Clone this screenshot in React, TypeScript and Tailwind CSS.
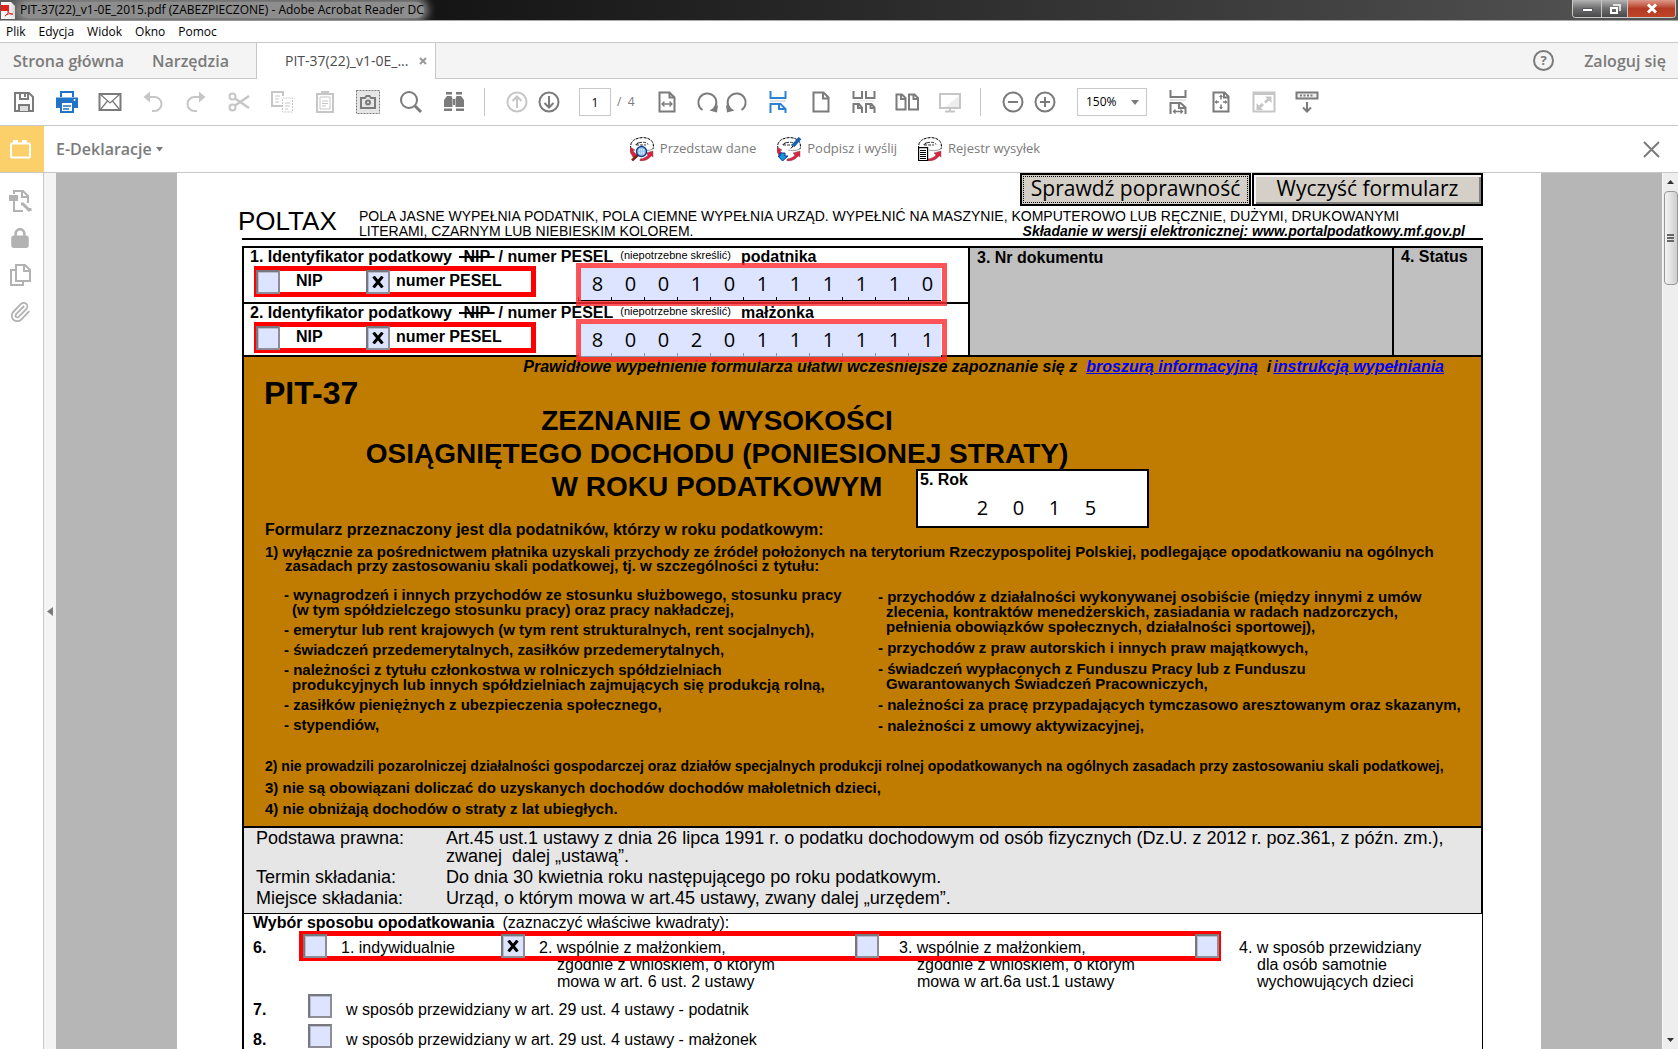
import { useState } from "react";
import type { ReactNode } from "react";
import { FaLock } from "react-icons/fa6";
import { Paperclip } from "lucide-react";
import clsx from "clsx";

interface IconProps {
  children: ReactNode;
  className?: string;
}

const Icon: React.FC<IconProps> = ({ children, className }) => (
  <svg
    viewBox="0 0 24 24"
    width="24"
    height="24"
    fill="none"
    stroke="currentColor"
    strokeWidth="2"
    className={className}
    aria-hidden="true"
  >
    {children}
  </svg>
);

const SaveIcon = () => (
  <Icon>
    <path d="M3 3h14l4 4v14H3z" />
    <path d="M8 3v6h8V3M13 4v3" />
    <path d="M7 21v-6h10v6" fill="#ddd" />
  </Icon>
);

const PrintIcon = () => (
  <Icon>
    <path d="M6 7V2h12v5" />
    <path d="M1 7.500h22V18h-4v-5H5v5H1z" fill="currentColor" stroke="none" />
    <path d="M6 13v9h12v-9" />
    <path d="M8 16h8M8 19h6" strokeWidth="1.500" />
    <circle cx="19.500" cy="10" r="1" fill="#fff" stroke="none" />
  </Icon>
);

const MailIcon = () => (
  <Icon>
    <path d="M1.500 4h21v16h-21z" />
    <path d="M2 4l10 9 10-9M2 20l7.500-9M22 20l-7.500-9" strokeWidth="1.300" />
  </Icon>
);

const UndoIcon = () => (
  <Icon>
    <path d="M5 7h8.500a7 7 0 010 14H11" />
    <path d="M9 1.500v11L2.500 7z" fill="currentColor" stroke="none" />
  </Icon>
);

const RedoIcon = () => (
  <Icon>
    <path d="M19 7h-8.500a7 7 0 000 14H13" />
    <path d="M15 1.500v11L21.500 7z" fill="currentColor" stroke="none" />
  </Icon>
);

const CutIcon = () => (
  <Icon>
    <circle cx="5.500" cy="6.500" r="3" />
    <circle cx="5.500" cy="17.500" r="3" />
    <path d="M8 8.500L22 18M8 15.500L22 6" strokeWidth="2.500" />
  </Icon>
);

const CopyIcon = () => (
  <Icon>
    <path d="M12 16H2V2h11v4" />
    <path d="M5 6h5M5 9h4M5 12h4" strokeWidth="1" />
    <path d="M12.500 8h10v14h-10z" strokeWidth="1" strokeDasharray="2 1" />
    <path d="M15 13h5M15 16h5M15 19h3" strokeWidth="1" />
  </Icon>
);

const PasteIcon = () => (
  <Icon>
    <path d="M4 4h16v18H4z" />
    <path d="M8 1h8v4H8z" fill="currentColor" stroke="none" />
    <path d="M7 7h10v12H7z" strokeWidth="1" />
    <path d="M9 11h6M9 13.500h6M9 16h4" strokeWidth="1" />
  </Icon>
);

const SnapshotIcon = () => (
  <Icon>
    <path d="M.5.5h23v23H.5z" fill="#e6e6e6" strokeWidth="1" strokeDasharray="2 1" />
    <path d="M5 8h4l1.500-2h3L15 8h4v10H5z" fill="#e6e6e6" />
    <circle cx="12" cy="12.500" r="2" />
  </Icon>
);

const SearchIcon = () => (
  <Icon>
    <circle cx="10" cy="10" r="8" />
    <path d="M16 16l6 6" strokeWidth="3" />
  </Icon>
);

const FindIcon = () => (
  <Icon>
    <g fill="currentColor" stroke="none">
      <path d="M4 2h6v2.500H4zM14 2h6v2.500h-6zM5 6h4.500l1 3v8H2v-7zM14.500 6H19l3 4v7h-8.500V9zM11 9h2v6h-2zM2 18.500h8V21H2zM14 18.500h8V21h-8z" />
    </g>
  </Icon>
);

const ArrowCircle = ({ up }: { up?: boolean }) => (
  <Icon>
    <circle cx="12" cy="12" r="9.500" />
    {up ? (
      <path d="M12 18V7M7.500 11L12 6.500l4.500 4.500" />
    ) : (
      <path d="M12 6v11M7.500 13l4.500 4.500 4.500-4.500" />
    )}
  </Icon>
);

const FitWidthIcon = () => (
  <Icon>
    <path d="M4.500 2.500h10l5 5v14h-15zM14.500 2.500v5h5" />
    <path d="M7 14h10M9.500 11.500L7 14l2.500 2.500M14.500 11.500L17 14l-2.500 2.500" strokeWidth="1.300" />
  </Icon>
);

const RotateIcon = ({ ccw }: { ccw?: boolean }) => (
  <Icon className={clsx(ccw && "-scale-x-100")}>
    <path d="M6.500 20A9 9 0 1118 18.500" />
    <path d="M22 15l-1 7.500-7.500-2z" fill="currentColor" stroke="none" />
  </Icon>
);

const ScrollPageIcon = () => (
  <Icon>
    <path d="M4.500 1v7h15V1" />
    <path d="M4 11h16" stroke="#e4e4e4" />
    <path d="M4.500 23v-9h10l5 5v4M13 14v5h6" />
  </Icon>
);

const PageIcon = () => (
  <Icon>
    <path d="M4.500 2.500h10l5 5v14h-15zM14 2.500v6h5.500" />
  </Icon>
);

const TwoScrollIcon = () => (
  <Icon>
    <path d="M1.500 1v7h8.500V1M14 1v7h8.500V1" />
    <path d="M1 11h22" stroke="#e4e4e4" strokeWidth="1" />
    <path d="M1.500 23v-9H7l3 3.500V23M6 14v4h4M14 23v-9h5.500l3 3.500V23M18.500 14v4h4" />
  </Icon>
);

const TwoPageIcon = () => (
  <Icon>
    <path d="M1.500 4.500H7L10.500 8v11.500h-9zM6 4.500V9h4.500M14 4.500h5.500L23 8v11.500h-9zM18.500 4.500V9H23" />
  </Icon>
);

const MonitorIcon = () => (
  <Icon>
    <path d="M2 4h20v14H2z" />
    <path d="M21 6v11H7z" fill="#eee" stroke="none" />
    <path d="M12 18v3M7 21.500h10" />
  </Icon>
);

const ZoomCircle = ({ plus }: { plus?: boolean }) => (
  <Icon>
    <circle cx="12" cy="12" r="9.500" />
    <path d={plus ? "M7 12h10M12 7v10" : "M7 12h10"} />
  </Icon>
);

const ScrollWidthIcon = () => (
  <Icon>
    <path d="M4.500 0v7h15V0" />
    <path d="M4 10h16" stroke="#e4e4e4" />
    <path d="M4.500 24V13h10l5 4.500V24M13 13v5h6" />
    <path d="M7.500 21.500h9M9.500 19.500l-2 2 2 2M14.500 19.500l2 2-2 2" strokeWidth="1.300" />
  </Icon>
);

const FitPageIcon = () => (
  <Icon>
    <path d="M4.500 2.500h11l4 4v15h-15zM15 2.500v5h4.500" />
    <path d="M12 5.500v4M12 14.500v4M6.500 12H10M14 12h3.500" strokeWidth="1.500" />
    <path d="M12 4.500l2 2.500h-4zM12 19.500l2-2.500h-4zM5.500 12L8 10v4zM18.500 12L16 10v4z" fill="currentColor" stroke="none" />
  </Icon>
);

const FullScreenIcon = () => (
  <Icon>
    <path d="M1.500 2.500h21v19h-21z" />
    <path d="M1 4h22" />
    <path d="M13 6.500h6.500V13L17 10.500 14 13.500 12 11.500l3-3zM4.500 13l2.500 2.500 3-2.500 2 2-3 3 2 2H4.500z" fill="currentColor" stroke="none" />
  </Icon>
);

const KeyboardIcon = () => (
  <Icon>
    <path d="M1.500 2.500h21v6h-21z" fill="#eee" />
    <path d="M5 5.500h14" strokeDasharray="2 1.500" />
    <path d="M12 12v9M8 17.500l4 4 4-4" />
  </Icon>
);

const BrickIcon = () => (
  <svg width="22" height="20" viewBox="0 0 22 20" aria-hidden="true">
    <rect x="1" y="4.500" width="19" height="14" rx="1" fill="none" stroke="#fff" strokeWidth="2" />
    <path d="M3 4V1h5v3zM12 4V1h5v3z" fill="#fff" />
  </svg>
);

type DeclKind = "show" | "sign" | "list";

const DeclIcon = ({ kind }: { kind: DeclKind }) => (
  <svg width="24" height="24" viewBox="0 0 24 24" fill="none" aria-hidden="true">
    <path d="M1 12C-1 4 6 .6 13 .6S25 5 23 12" stroke="#000" strokeDasharray="3 1" />
    <path d="M6 8c0-3 11-4 12-.5M9 5.500l-3 2.500h10" stroke="#000" strokeWidth=".8" strokeDasharray="3 1" />
    <path d="M11 13c3 1 8 1 12-1" stroke="#888" strokeWidth=".8" />
    {kind !== "list" && <path d="M0 10l5 3-2 1 5 5-4 3-4-7z" fill="#e0203f" stroke="#666" strokeWidth=".5" />}
    <path d="M10 22c4-.5 6-2 8-4l-2-2 7-2v6l-1.500-1c-3 3-6 5-11.500 5z" fill="#e0203f" stroke="#666" strokeWidth=".5" />
    {kind === "show" && (
      <>
        <path d="M8 18l-6 5.500" stroke="#7d2512" strokeWidth="2.500" />
        <circle cx="11.500" cy="14.500" r="5" fill="#9cc8f5" stroke="#123a8a" strokeWidth="1.400" />
        <path d="M9 13h5M9 16h5" stroke="#fff" strokeDasharray="1 1" />
      </>
    )}
    {kind === "sign" && (
      <>
        <path d="M23 1l-7 8" stroke="#1560b0" strokeWidth="3.500" />
        <path d="M16 9l-2 2.500" stroke="#000" />
        <path d="M3 16h5v3h3l-5.500 5L1 19h2z" fill="#0d9bd0" stroke="#1b2fae" />
      </>
    )}
    {kind === "list" && (
      <>
        <path d="M.6 10.600h9v13h-9z" fill="#fff" stroke="#000" strokeWidth="1.200" />
        <path d="M2 13.500h6M2 15.500h6M2 17.500h6M2 19.500h6M2 21.500h6" stroke="#000" />
      </>
    )}
  </svg>
);

interface ToolProps {
  label: string;
  icon: ReactNode;
  width?: string;
  tone?: string;
}

const Tool: React.FC<ToolProps> = ({
  label,
  icon,
  width = "w-[43px]",
  tone = "text-[#7b7b7b]",
}) => (
  <button
    type="button"
    aria-label={label}
    className={clsx("flex h-9 shrink-0 items-center justify-center", width, tone)}
  >
    {icon}
  </button>
);

const FAINT = "text-[#c6c6c6]";

const fileTools: ToolProps[] = [
  { label: "Zapisz", icon: <SaveIcon /> },
  { label: "Drukuj", icon: <PrintIcon />, tone: "text-[#2173c6]" },
  { label: "Wyślij e-mail", icon: <MailIcon /> },
  { label: "Cofnij", icon: <UndoIcon />, tone: FAINT },
  { label: "Ponów", icon: <RedoIcon />, tone: FAINT },
  { label: "Wytnij", icon: <CutIcon />, tone: FAINT },
  { label: "Kopiuj", icon: <CopyIcon />, tone: FAINT },
  { label: "Wklej", icon: <PasteIcon />, tone: FAINT },
  { label: "Migawka", icon: <SnapshotIcon /> },
  { label: "Znajdź", icon: <SearchIcon /> },
  { label: "Wyszukiwanie zaawansowane", icon: <FindIcon /> },
];

const viewTools: ToolProps[] = [
  { label: "Przewijanie", icon: <ScrollPageIcon />, tone: "text-[#2a82d6]" },
  { label: "Jedna strona", icon: <PageIcon /> },
  { label: "Przewijanie dwóch stron", icon: <TwoScrollIcon /> },
  { label: "Dwie strony", icon: <TwoPageIcon /> },
  { label: "Tryb czytania", icon: <MonitorIcon />, tone: FAINT },
];

const fitTools: ToolProps[] = [
  { label: "Dopasuj szerokość", icon: <ScrollWidthIcon /> },
  { label: "Dopasuj stronę", icon: <FitPageIcon /> },
  { label: "Pełny ekran", icon: <FullScreenIcon />, tone: FAINT },
  { label: "Klawiatura", icon: <KeyboardIcon /> },
];

const TitleBar = () => (
  <header className="flex h-[21px] shrink-0 items-start justify-between border-b border-[#a9a9a9] bg-linear-to-r from-[#5a5a5a] via-[#151515] via-26% to-[#555]">
    <div className="flex h-5 items-center gap-[5px] pl-px">
      <svg width="14" height="17" viewBox="0 0 14 17" aria-hidden="true">
        <path d="M0 0h10l4 4v13H0z" fill="#f4f4f4" />
        <path d="M0 3h8v6H0z" fill="#e2231a" />
        <path d="M4 14c3-2 4-5 3-7-1 3 2 6 5 5-3-1-6 0-8 2z" fill="none" stroke="#e2231a" />
      </svg>
      <span className="rounded-full bg-[#8d8d8d] text-xs leading-4 text-black shadow-[0_0_8px_4px_#8d8d8d]">
        PIT-37(22)_v1-0E_2015.pdf (ZABEZPIECZONE) - Adobe Acrobat Reader DC
      </span>
    </div>
    <div className="mr-0.5 flex h-[18px] overflow-hidden rounded-b border border-t-0 border-[#c8c8c8]">
      <button type="button" aria-label="Minimalizuj" className="flex w-[29px] items-center justify-center border-r border-[#c8c8c8] bg-linear-to-b from-[#b5b5b5] via-[#6e6e6e] via-50% to-[#494949]">
        <svg width="11" height="6" viewBox="0 0 11 6"><path d="M.5 2.500h10v3H.5z" fill="#fff" stroke="#556" /></svg>
      </button>
      <button type="button" aria-label="Przywróć" className="flex w-[26px] items-center justify-center border-r border-[#c8c8c8] bg-linear-to-b from-[#b5b5b5] via-[#6e6e6e] via-50% to-[#494949]">
        <svg width="12" height="12" viewBox="0 0 12 12" fill="none" stroke="#fff" strokeWidth="2">
          <path d="M4 2h7v6" strokeWidth="1.500" />
          <path d="M2 5h6v5H2z" />
        </svg>
      </button>
      <button type="button" aria-label="Zamknij" className="flex w-[47px] items-center justify-center bg-linear-to-b from-[#dc9a8c] via-[#b53a22] via-50% to-[#c04428]">
        <svg width="12" height="11" viewBox="0 0 12 11" stroke="#fff" strokeWidth="3"><path d="M2 1.500l8 8M10 1.500l-8 8" /></svg>
      </button>
    </div>
  </header>
);

const MenuBar = () => (
  <nav className="flex h-[21px] shrink-0 items-center gap-[13px] bg-white pl-1.5 text-xs text-black">
    {["Plik", "Edycja", "Widok", "Okno", "Pomoc"].map((item) => (
      <button key={item} type="button">
        {item}
      </button>
    ))}
  </nav>
);

const TabBar = () => (
  <div className="flex h-[37px] shrink-0 items-stretch border-y border-[#c8c8c8] bg-[#f4f4f4] text-base font-semibold text-[#7b7b7b]">
    <div className="flex w-64 items-center gap-7 pl-[13px]">
      <button type="button">Strona główna</button>
      <button type="button">Narzędzia</button>
    </div>
    <div className="-mb-px flex w-[180px] items-center justify-between border-x border-[#c8c8c8] bg-white pr-2 pl-7 text-sm font-normal text-[#4b4b4b]">
      PIT-37(22)_v1-0E_...
      <button type="button" aria-label="Zamknij kartę" className="text-[#999]">
        <svg width="8" height="8" viewBox="0 0 8 8" stroke="currentColor" strokeWidth="2"><path d="M1 1l6 6M7 1L1 7" /></svg>
      </button>
    </div>
    <div className="flex flex-1 items-center justify-end gap-[30px] pr-3">
      <button type="button" aria-label="Pomoc" className="flex size-[21px] items-center justify-center rounded-full border-2 border-[#7b7b7b] text-[13px] leading-none font-bold">
        ?
      </button>
      <button type="button">Zaloguj się</button>
    </div>
  </div>
);

const Toolbar = () => {
  const [page, setPage] = useState("1");

  return (
    <div className="flex h-[47px] shrink-0 items-center border-b border-[#c8c8c8] bg-white pl-0.5">
      {fileTools.map((tool) => (
        <Tool key={tool.label} {...tool} />
      ))}
      <div className="mr-4 ml-[9px] h-7 w-px bg-[#c8c8c8]" />
      <Tool label="Poprzednia strona" icon={<ArrowCircle up />} width="w-8" tone={FAINT} />
      <Tool label="Następna strona" icon={<ArrowCircle />} width="w-8" />
      <input
        aria-label="Numer strony"
        value={page}
        onChange={(e) => setPage(e.target.value)}
        className="ml-3.5 h-7 w-8 border border-[#c8c8c8] text-center text-xs"
      />
      <span className="ml-1.5 w-7 text-xs text-[#7b7b7b]">/&nbsp; 4</span>
      <Tool label="Dopasuj do szerokości" icon={<FitWidthIcon />} />
      <div className="mx-1.5 flex">
        <Tool label="Obróć w prawo" icon={<RotateIcon />} width="w-7" />
        <Tool label="Obróć w lewo" icon={<RotateIcon ccw />} width="w-7" />
      </div>
      {viewTools.map((tool) => (
        <Tool key={tool.label} {...tool} />
      ))}
      <div className="mr-4 ml-[9px] h-7 w-px bg-[#c8c8c8]" />
      <Tool label="Pomniejsz" icon={<ZoomCircle />} width="w-8" />
      <Tool label="Powiększ" icon={<ZoomCircle plus />} width="w-8" />
      <div className="relative mr-[9px] ml-4">
        <select
          aria-label="Powiększenie"
          defaultValue="150%"
          className="h-7 w-[70px] appearance-none border border-[#c8c8c8] bg-white pl-2 text-xs"
        >
          <option>100%</option>
          <option>150%</option>
          <option>200%</option>
        </select>
        <svg width="8" height="5" viewBox="0 0 8 5" className="pointer-events-none absolute top-3 right-2" fill="#7b7b7b">
          <path d="M0 0h8L4 5z" />
        </svg>
      </div>
      {fitTools.map((tool) => (
        <Tool key={tool.label} {...tool} />
      ))}
    </div>
  );
};

const actions: { label: string; kind: DeclKind }[] = [
  { label: "Przedstaw dane", kind: "show" },
  { label: "Podpisz i wyślij", kind: "sign" },
  { label: "Rejestr wysyłek", kind: "list" },
];

const DeclarationBar = () => (
  <div className="flex h-[47px] shrink-0 items-stretch border-b border-[#c8c8c8] bg-white text-[#7b7b7b]">
    <div className="flex flex-1 items-center">
      <div className="flex h-full w-11 items-center justify-center bg-[#fbd06b] pr-0.5">
        <BrickIcon />
      </div>
      <button type="button" className="flex items-center gap-1 pl-3 text-base font-semibold">
        E-Deklaracje
        <svg width="7" height="5" viewBox="0 0 7 5" fill="currentColor"><path d="M0 0h7L3.500 4.500z" /></svg>
      </button>
    </div>
    <div className="flex items-center gap-[21px] pl-2.5">
      {actions.map(({ label, kind }) => (
        <button key={label} type="button" className="flex items-center gap-1.5 text-[13px]">
          <DeclIcon kind={kind} />
          {label}
        </button>
      ))}
    </div>
    <div className="flex flex-1 items-center justify-end pr-[18px]">
      <button type="button" aria-label="Zamknij panel">
        <svg width="17" height="17" viewBox="0 0 17 17" stroke="currentColor" strokeWidth="2"><path d="M1 1l15 15M16 1L1 16" /></svg>
      </button>
    </div>
  </div>
);

const SideRail = () => (
  <aside className="flex shrink-0">
    <div className="flex w-11 flex-col items-center gap-[13px] border-r border-[#c8c8c8] bg-white pt-4 pr-1 text-[#b2b2b2]">
      <button type="button" aria-label="Miniatury" className="h-6">
        <Icon>
          <path d="M6 5V2h9l5 5v7M6 12v10h9M14 3v5h5" />
          <path d="M1 6h9v6H1z" fill="currentColor" stroke="none" />
          <path d="M15 15l7 7M13 15h3M22 19v3" strokeWidth="3" />
        </Icon>
      </button>
      <button type="button" aria-label="Zabezpieczenia" className="flex h-6 items-center">
        <FaLock size={20} />
      </button>
      <button type="button" aria-label="Strony" className="h-6">
        <Icon>
          <path d="M8 7H3v15h12v-4" />
          <path d="M8 2h9l5 5v11H8zM16 2v6h5" />
        </Icon>
      </button>
      <button type="button" aria-label="Załączniki" className="flex h-6 items-center">
        <Paperclip size={22} strokeWidth={2} />
      </button>
    </div>
    <button type="button" aria-label="Pokaż panel" className="flex w-3 items-center justify-center bg-[#f4f4f4]">
      <svg width="6" height="9" viewBox="0 0 6 9" fill="#7b7b7b"><path d="M6 0v9L0 4.500z" /></svg>
    </button>
  </aside>
);

const ScrollBar = () => (
  <div className="flex w-4 shrink-0 flex-col items-center border-l border-[#f8f8f8] bg-[#eeeeee]" aria-hidden="true">
    <div className="flex h-[18px] items-center">
      <svg width="7" height="4" viewBox="0 0 7 4" fill="#333"><path d="M0 4h7L3.500 0z" /></svg>
    </div>
    <div className="flex h-[94px] w-3.5 flex-col items-center justify-center gap-px rounded-sm border border-[#979797] bg-linear-to-r from-[#f4f4f4] to-[#cfcfcf]">
      <div className="h-0.5 w-[7px] bg-[#666]" />
      <div className="h-0.5 w-[7px] bg-[#666]" />
      <div className="h-0.5 w-[7px] bg-[#666]" />
    </div>
    <div className="mt-auto flex h-[18px] items-center">
      <svg width="7" height="4" viewBox="0 0 7 4" fill="#333"><path d="M0 0h7L3.500 4z" /></svg>
    </div>
  </div>
);

interface CheckProps {
  id: string;
  label?: string;
  checked?: boolean;
}

const Check: React.FC<CheckProps> = ({ id, label, checked = false }) => {
  const [on, setOn] = useState(checked);

  return (
    <span className="relative z-20 block size-6 shrink-0">
      <input
        id={id}
        type="checkbox"
        aria-label={label}
        checked={on}
        onChange={() => setOn(!on)}
        className="block size-6 appearance-none border-2 border-[#77777f] border-r-[#8d8d95] border-b-[#8d8d95] bg-[#dde4ff] shadow-[inset_1px_1px_0_#b9bccb]"
      />
      {on && (
        <svg viewBox="0 0 12 12" className="pointer-events-none absolute top-1.5 left-1.5 size-3" stroke="#000" strokeWidth="3">
          <path d="M1.500.5l9 11M10.500.5l-9 11" />
        </svg>
      )}
    </span>
  );
};

interface CombFieldProps {
  digits: string;
  label: string;
  tick: string;
}

const CombField: React.FC<CombFieldProps> = ({ digits, label, tick }) => (
  <div className="relative z-10 mt-[3px] flex h-[33px] bg-[#dde4ff]">
    {digits.split("").map((digit, i) => (
      <div key={i} className="relative w-[33px]">
        <input
          aria-label={`${label}, cyfra ${i + 1}`}
          defaultValue={digit}
          maxLength={1}
          className="h-[31px] w-full bg-transparent pl-1.5 text-center font-['Open_Sans',sans-serif] text-xl text-black"
        />
        <span className={clsx("absolute bottom-0 left-0 h-1 w-full border-b border-l", tick)} />
      </div>
    ))}
    <span className="pointer-events-none absolute -inset-y-[5px] -right-1.5 -left-0.5 border-[5px] border-[#ff2a2f]/80" />
  </div>
);

interface TaxIdRowProps {
  no: number;
  who: string;
  digits: string;
  tick: string;
}

const TaxIdRow: React.FC<TaxIdRowProps> = ({ no, who, digits, tick }) => (
  <>
    <div className="flex gap-1 pt-px pl-1.5 leading-4 font-bold">
      <span className="w-[205px]">{no}. Identyfikator podatkowy</span>
      <span className="line-through decoration-2">&nbsp;NIP&nbsp;</span>
      <span>/ numer PESEL</span>
      <span className="mr-1.5 ml-[3px] text-[11px] leading-3 font-normal">(niepotrzebne skreślić)</span>
      <span>{who}</span>
    </div>
    <div className="flex items-start pl-2.5">
      <div className="relative mt-px mr-[42px] flex h-[31px] w-[282px] items-center pl-0.5 font-bold">
        <span className="absolute inset-0 border-[5px] border-[#ff0000]" />
        <Check id={`nip-${no}`} />
        <label htmlFor={`nip-${no}`} className="ml-4 w-[70px] pb-0.5 leading-4">
          NIP
        </label>
        <Check id={`pesel-${no}`} checked />
        <label htmlFor={`pesel-${no}`} className="ml-1.5 pb-0.5 leading-4">
          numer PESEL
        </label>
      </div>
      <CombField digits={digits} label={`PESEL ${who}`} tick={tick} />
    </div>
  </>
);

const leftItems: string[][] = [
  [
    "- wynagrodzeń i innych przychodów ze stosunku służbowego, stosunku pracy",
    "(w tym spółdzielczego stosunku pracy) oraz pracy nakładczej,",
  ],
  ["- emerytur lub rent krajowych (w tym rent strukturalnych, rent socjalnych),"],
  ["- świadczeń przedemerytalnych, zasiłków przedemerytalnych,"],
  [
    "- należności z tytułu członkostwa w rolniczych spółdzielniach",
    "produkcyjnych lub innych spółdzielniach zajmujących się produkcją rolną,",
  ],
  ["- zasiłków pieniężnych z ubezpieczenia społecznego,"],
  ["- stypendiów,"],
];

const rightItems: string[][] = [
  [
    "- przychodów z działalności wykonywanej osobiście (między innymi z umów",
    "zlecenia, kontraktów menedżerskich, zasiadania w radach nadzorczych,",
    "pełnienia obowiązków społecznych, działalności sportowej),",
  ],
  ["- przychodów z praw autorskich i innych praw majątkowych,"],
  [
    "- świadczeń wypłaconych z Funduszu Pracy lub z Funduszu",
    "Gwarantowanych Świadczeń Pracowniczych,",
  ],
  ["- należności za pracę przypadających tymczasowo aresztowanym oraz skazanym,"],
  ["- należności z umowy aktywizacyjnej,"],
];

const IncomeList = ({ items, className }: { items: string[][]; className: string }) => (
  <ul className={clsx("flex flex-col whitespace-nowrap", className)}>
    {items.map((lines) => (
      <li key={lines[0]} className="pl-2">
        {lines.map((line, i) => (
          <span key={line} className={clsx("block", i === 0 && "-ml-2")}>
            {line}
          </span>
        ))}
      </li>
    ))}
  </ul>
);

const FormIntro = () => (
  <section className="border-x-2 border-b-2 border-black bg-[#bf7c00] pt-0.5 pb-2.5 font-bold">
    <p className="flex justify-end gap-[9px] pr-[37px] leading-4 whitespace-nowrap italic">
      Prawidłowe wypełnienie formularza ułatwi wcześniejsze zapoznanie się z
      <a href="#broszura" className="text-[#0000ff] underline">
        broszurą informacyjną
      </a>
      <span className="flex gap-0.5">
        i
        <a href="#instrukcja" className="text-[#0000ff] underline">
          instrukcją wypełniania
        </a>
      </span>
    </p>
    <p className="mt-0.5 h-[27px] pl-5 text-[32px] leading-8">PIT-37</p>
    <div className="grid">
      <div className="[grid-area:1/1]">
        <h1 className="w-[946px] text-center text-[28px] leading-[33px]">
          ZEZNANIE O WYSOKOŚCI
          <br />
          OSIĄGNIĘTEGO DOCHODU (PONIESIONEJ STRATY)
          <br />W ROKU PODATKOWYM
        </h1>
        <p className="mt-[19px] pl-[21px] leading-4">
          Formularz przeznaczony jest dla podatników, którzy w roku podatkowym:
        </p>
      </div>
      <div className="mb-2.5 ml-[672px] h-[59px] w-[233px] self-end border-2 border-black bg-white px-0.5 pt-px [grid-area:1/1]">
        <div className="leading-4">5. Rok</div>
        <div className="mt-1.5 flex justify-center pl-2 font-['Open_Sans',sans-serif] text-xl leading-7 font-normal">
          {"2015".split("").map((digit) => (
            <span key={digit} className="w-9 text-center">
              {digit}
            </span>
          ))}
        </div>
      </div>
    </div>
    <div className="mt-[7px] pl-[21px] text-[15px] leading-[15px] whitespace-nowrap">
      <p className="leading-[14px]">
        1) wyłącznie za pośrednictwem płatnika uzyskali przychody ze źródeł położonych na terytorium
        Rzeczypospolitej Polskiej, podlegające opodatkowaniu na ogólnych
        <span className="block pl-5">
          zasadach przy zastosowaniu skali podatkowej, tj. w szczególności z tytułu:
        </span>
      </p>
      <div className="mt-3.5 grid grid-cols-[594px_1fr] pl-[19px]">
        <IncomeList items={leftItems} className="gap-[5px]" />
        <IncomeList items={rightItems} className="gap-1.5 pt-0.5" />
      </div>
      <div className="mt-[26px] flex flex-col gap-1.5">
        <p className="text-sm leading-[15px]">
          2) nie prowadzili pozarolniczej działalności gospodarczej oraz działów specjalnych produkcji
          rolnej opodatkowanych na ogólnych zasadach przy zastosowaniu skali podatkowej,
        </p>
        <p>3) nie są obowiązani doliczać do uzyskanych dochodów dochodów małoletnich dzieci,</p>
        <p>4) nie obniżają dochodów o straty z lat ubiegłych.</p>
      </div>
    </div>
  </section>
);

const LegalBasis = () => (
  <dl className="grid grid-cols-[190px_1fr] gap-y-[3px] border-x-2 border-b border-black bg-[#e6e6e6] pt-px pb-1.5 pl-3 text-lg leading-[18px]">
    <dt>Podstawa prawna:</dt>
    <dd>
      Art.45 ust.1 ustawy z dnia 26 lipca 1991 r. o podatku dochodowym od osób fizycznych (Dz.U. z
      2012 r. poz.361, z późn. zm.),
      <br />
      zwanej&nbsp; dalej „ustawą”.
    </dd>
    <dt>Termin składania:</dt>
    <dd>Do dnia 30 kwietnia roku następującego po roku podatkowym.</dd>
    <dt>Miejsce składania:</dt>
    <dd>Urząd, o którym mowa w art.45 ustawy, zwany dalej „urzędem”.</dd>
  </dl>
);

interface ChoiceProps {
  id: string;
  lines: string[];
  gap: string;
  checked?: boolean;
}

const Choice: React.FC<ChoiceProps> = ({ id, lines, gap, checked }) => (
  <div className={clsx("flex pt-[3px]", gap)}>
    <Check id={id} checked={checked} />
    <label htmlFor={id} className="pt-[5px] pl-[18px] leading-[17px] whitespace-nowrap">
      {lines.map((line, i) => (
        <span key={line} className={clsx("block", i === 0 && "-ml-[18px]")}>
          {line}
        </span>
      ))}
    </label>
  </div>
);

const otherChoices = [
  { no: 7, who: "podatnik" },
  { no: 8, who: "małżonek" },
];

const TaxationChoice = () => (
  <section className="border-r border-l-2 border-black bg-white pt-px pb-10 pl-[9px]">
    <h2 className="flex gap-2 leading-4">
      <b>Wybór sposobu opodatkowania</b> (zaznaczyć właściwe kwadraty):
    </h2>
    <div className="relative grid grid-cols-[50px_198px_354px_340px_1fr]">
      <b className="pt-2 leading-[17px]">6.</b>
      <Choice id="p6-1" gap="gap-3.5" lines={["1. indywidualnie"]} />
      <Choice
        id="p6-2"
        gap="gap-3.5"
        checked
        lines={["2. wspólnie z małżonkiem,", "zgodnie z wnioskiem, o którym", "mowa w art. 6 ust. 2 ustawy"]}
      />
      <Choice
        id="p6-3"
        gap="gap-5"
        lines={["3. wspólnie z małżonkiem,", "zgodnie z wnioskiem, o którym", "mowa w art.6a ust.1 ustawy"]}
      />
      <Choice
        id="p6-4"
        gap="gap-5"
        lines={["4. w sposób przewidziany", "dla osób samotnie", "wychowujących dzieci"]}
      />
      <span className="pointer-events-none absolute top-0 left-[46px] z-10 h-[30px] w-[922px] border-[5px] border-[#ff0000]" />
    </div>
    <div className="mt-1 flex flex-col gap-1.5">
      {otherChoices.map(({ no, who }) => (
        <div key={no} className="flex items-end leading-4">
          <b className="w-[55px]">{no}.</b>
          <Check id={`p${no}`} />
          <label htmlFor={`p${no}`} className="pl-3.5">
            w sposób przewidziany w art. 29 ust. 4 ustawy - {who}
          </label>
        </div>
      ))}
    </div>
  </section>
);

const FormPage = () => (
  <div className="mx-auto w-full max-w-[1364px] bg-white pr-[58px] pl-[65px] font-['Liberation_Sans',Arial,sans-serif] text-base text-black">
    <div className="flex justify-end gap-px font-['Open_Sans',sans-serif] text-[21px]">
      <button type="button" className="h-[33px] w-[231px] border-2 border-black bg-[#d4d0c8] p-px leading-5">
        <span className="flex h-full items-center justify-center border border-dotted border-black pb-[3px]">
          Sprawdź poprawność
        </span>
      </button>
      <button type="button" className="h-[33px] w-[231px] border-2 border-black bg-[#d4d0c8] pb-[3px] leading-5 shadow-[inset_2px_2px_0_#f4f4f4,inset_-2px_-2px_0_#808080]">
        Wyczyść formularz
      </button>
    </div>
    <div className="flex h-[34px] border-b-2 border-black pt-[3px] text-sm leading-[15px]">
      <div className="-ml-1 w-[121px] text-[26px] leading-6">POLTAX</div>
      <div className="flex-1 whitespace-nowrap">
        POLA JASNE WYPEŁNIA PODATNIK, POLA CIEMNE WYPEŁNIA URZĄD. WYPEŁNIĆ NA MASZYNIE, KOMPUTEROWO LUB
        RĘCZNIE, DUŻYMI, DRUKOWANYMI
        <div className="flex justify-between pr-[18px]">
          <span>LITERAMI, CZARNYM LUB NIEBIESKIM KOLOREM.</span>
          <b className="italic">Składanie w wersji elektronicznej: www.portalpodatkowy.mf.gov.pl</b>
        </div>
      </div>
    </div>
    <div className="mt-1.5 flex border-2 border-black">
      <div className="w-[724px]">
        <div className="h-14 border-b-2 border-black">
          <TaxIdRow no={1} who="podatnika" digits="80010111110" tick="border-black" />
        </div>
        <div className="h-[51px]">
          <TaxIdRow no={2} who="małżonka" digits="80020111111" tick="border-[#8d93ad]" />
        </div>
      </div>
      <div className="flex-1 border-l-2 border-black bg-[#c0c0c0] pt-0.5 pl-[7px] leading-4 font-bold">
        3. Nr dokumentu
      </div>
      <div className="w-[89px] border-l-2 border-black bg-[#c0c0c0] pt-px pl-[7px] leading-4 font-bold">4. Status</div>
    </div>
    <FormIntro />
    <LegalBasis />
    <TaxationChoice />
  </div>
);

export default function App() {
  return (
    <div className="flex h-screen flex-col overflow-hidden bg-white font-['Open_Sans',sans-serif]">
      <TitleBar />
      <MenuBar />
      <TabBar />
      <Toolbar />
      <DeclarationBar />
      <div className="flex min-h-0 flex-1">
        <SideRail />
        <main className="min-w-0 flex-1 overflow-hidden bg-[#b6b6b6]">
          <FormPage />
        </main>
        <ScrollBar />
      </div>
    </div>
  );
}
